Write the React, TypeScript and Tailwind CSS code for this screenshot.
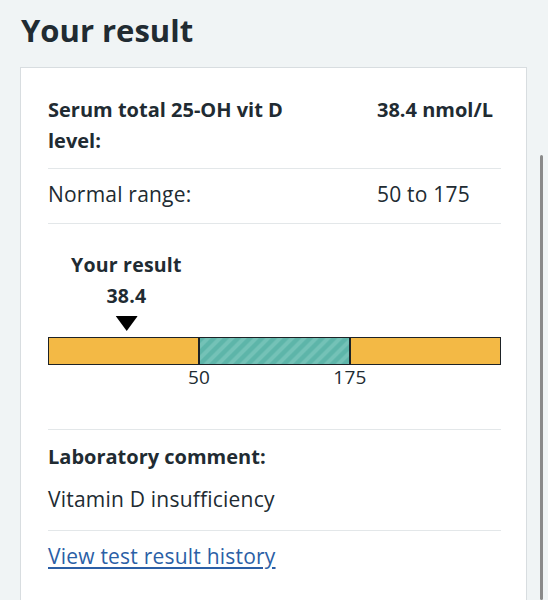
const result = {
  name: "Serum total 25-OH vit D level:",
  value: "38.4 nmol/L",
  range: "50 to 175",
  reading: "38.4",
  // where the reading sits along the bar, in percent
  markerPct: 17.3,
  comment: "Vitamin D insufficiency",
};

function Marker() {
  return (
    <div
      className="absolute top-0 flex -translate-x-1/2 flex-col items-center text-[19.5px] font-bold"
      style={{ left: `${result.markerPct}%` }}
    >
      <span className="whitespace-nowrap">Your result</span>
      <span>{result.reading}</span>
      <svg width="22" height="15" viewBox="0 0 22 15" className="mt-[5px]">
        <path d="M0 0H22L11 15Z" fill="#000" />
      </svg>
    </div>
  );
}

function RangeBar() {
  return (
    <div className="border-b border-[#e3e7e9] pb-[40px] pt-[25px]">
      <div className="relative h-[88px]">
        <Marker />
      </div>
      <div className="flex h-[28px] border-[1.5px] border-[#1d2226]">
        <div className="flex-1 bg-[#f3b945]" />
        <div className="flex-1 border-x-2 border-[#1d2226] bg-[repeating-linear-gradient(135deg,#5db5a9_0px,#5db5a9_3px,#74c2b7_4.5px,#74c2b7_7px,#5db5a9_8.5px)]" />
        <div className="flex-1 bg-[#f3b945]" />
      </div>
      <div className="relative h-[24px] text-[19px] leading-[24px]">
        <span className="absolute left-1/3 -translate-x-1/2">50</span>
        <span className="absolute left-2/3 -translate-x-1/2">175</span>
      </div>
    </div>
  );
}

export default function App() {
  return (
    <div className="min-h-screen bg-[#f0f4f5] px-[20px] pr-[21px] pt-[10px] font-['Open_Sans','Noto_Sans',sans-serif] text-[#212b32]">
      <h1 className="mb-[17px] pl-[1px] text-[31px] font-bold leading-[40px]">Your result</h1>

      <div className="border border-[#d8dde0] bg-white pb-[40px] pl-[27px] pr-[25px] pt-[26px] text-[21px] leading-[31px] tracking-[0.01em]">
        <div className="flex border-b border-[#e3e7e9] pb-[12px] text-[20px] font-bold tracking-normal">
          <div className="w-[329px] shrink-0 pr-[64px]">{result.name}</div>
          <div>{result.value}</div>
        </div>
        <div className="flex border-b border-[#e3e7e9] pb-[13px] pt-[10px]">
          <div className="w-[329px] shrink-0 pr-[64px]">Normal range:</div>
          <div>{result.range}</div>
        </div>

        <RangeBar />

        <div className="border-b border-[#e3e7e9] pb-[15px] pt-[11px]">
          <h2 className="text-[20px] font-bold tracking-normal">Laboratory comment:</h2>
          <p className="mt-[12px]">{result.comment}</p>
        </div>

        <div className="pt-[10px]">
          <a href="#" className="text-[#2b5fa6] underline underline-offset-[3px]">
            View test result history
          </a>
        </div>
      </div>

      <div className="fixed right-[5px] top-[155px] h-[445px] w-[3px] rounded-full bg-[#8a8a8a]" />
    </div>
  );
}
